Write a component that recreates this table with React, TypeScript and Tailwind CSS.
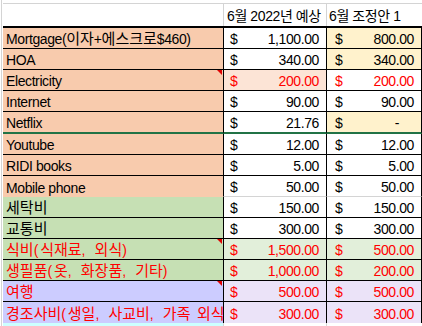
import React from 'react'

type Row = {
  label: string
  b: string
  c: string
  aBg: string
  bBg: string
  cBg: string
  aRed?: boolean
  red?: boolean
  note?: boolean
  line: string
}

const ORANGE = 'bg-[#f8cbad]'
const GREEN = 'bg-[#c6e0b4]'
const PURPLE = 'bg-[#ccccff]'
const WHITE = 'bg-white'
const YELLOW = 'bg-[#fff2cc]'
const LGREEN = 'bg-[#e2efda]'
const LPURPLE = 'bg-[#ebe3f8]'

const rows: Row[] = [
  { label: 'Mortgage(이자+에스크로$460)', b: '1,100.00', c: '800.00', aBg: ORANGE, bBg: WHITE, cBg: YELLOW, line: 'black' },
  { label: 'HOA', b: '340.00', c: '340.00', aBg: ORANGE, bBg: WHITE, cBg: YELLOW, line: 'black' },
  { label: 'Electricity', b: '200.00', c: '200.00', aBg: ORANGE, bBg: 'bg-[#fce4d6]', cBg: WHITE, red: true, note: true, line: 'black' },
  { label: 'Internet', b: '90.00', c: '90.00', aBg: ORANGE, bBg: WHITE, cBg: WHITE, line: 'black' },
  { label: 'Netflix', b: '21.76', c: '-', aBg: ORANGE, bBg: WHITE, cBg: YELLOW, line: 'green' },
  { label: 'Youtube', b: '12.00', c: '12.00', aBg: ORANGE, bBg: WHITE, cBg: WHITE, line: 'black' },
  { label: 'RIDI books', b: '5.00', c: '5.00', aBg: ORANGE, bBg: WHITE, cBg: WHITE, line: 'black' },
  { label: 'Mobile phone', b: '50.00', c: '50.00', aBg: ORANGE, bBg: WHITE, cBg: WHITE, line: 'gray' },
  { label: '세탁비', b: '150.00', c: '150.00', aBg: GREEN, bBg: WHITE, cBg: WHITE, line: 'black' },
  { label: '교통비', b: '300.00', c: '300.00', aBg: GREEN, bBg: WHITE, cBg: WHITE, line: 'black' },
  { label: '식비(식재료, 외식)', b: '1,500.00', c: '500.00', aBg: GREEN, bBg: LGREEN, cBg: LGREEN, aRed: true, red: true, note: true, line: 'black' },
  { label: '생필품(옷, 화장품, 기타)', b: '1,000.00', c: '200.00', aBg: GREEN, bBg: LGREEN, cBg: LGREEN, aRed: true, red: true, line: 'black' },
  { label: '여행', b: '500.00', c: '500.00', aBg: PURPLE, bBg: LPURPLE, cBg: LPURPLE, aRed: true, red: true, note: true, line: 'black' },
  { label: '경조사비(생일, 사교비, 가족 외식)', b: '300.00', c: '300.00', aBg: PURPLE, bBg: LPURPLE, cBg: LPURPLE, aRed: true, red: true, line: 'none' },
]

function lineClass(line: string, col: 'a' | 'bc') {
  if (line === 'black') return 'h-[21px] border-b border-black'
  if (line === 'green') return 'h-[22px] border-b-2 border-[#217346]'
  if (line === 'gray') return col === 'a' ? 'h-[21px]' : 'h-[21px] border-b border-[#d4d4d4]'
  return 'h-[21px]'
}

const HANGUL = /[\uac00-\ud7a3]/

// hangul is drawn larger; in all-korean labels the punctuation is half-width, like Gulim
function Label({ text }: { text: string }) {
  const korean = !/[A-Za-z]/.test(text)
  if (korean) {
    return (
      <>
        {Array.from(text).map((ch, i) =>
          HANGUL.test(ch) ? (
            <span key={i} className="text-[15px] tracking-normal">
              {ch}
            </span>
          ) : (
            <span key={i} className="inline-block w-[6.5px] whitespace-pre">
              {ch}
            </span>
          ),
        )}
      </>
    )
  }
  const parts = text.split(/([\uac00-\ud7a3]+)/).filter(Boolean)
  return (
    <>
      {parts.map((p, i) =>
        HANGUL.test(p) ? (
          <span key={i} className="text-[15px] tracking-normal">
            {p}
          </span>
        ) : (
          <span key={i}>{p}</span>
        ),
      )}
    </>
  )
}

function Money({ value, red, bg, line, padL, cls }: { value: string; red?: boolean; bg: string; line: string; padL: string; cls: string }) {
  return (
    <div className={`${cls} ${bg} ${lineClass(line, 'bc')} flex items-end justify-between pb-[1px] ${padL} ${value === '-' ? 'pr-[22px]' : 'pr-[7px]'} ${red ? 'text-[#ff0000]' : 'text-black'}`}>
      <span>$</span>
      <span>{value}</span>
    </div>
  )
}

export default function App() {
  return (
    <div
      className="relative h-[326px] w-[422px] overflow-hidden bg-white text-[14px] leading-[16px] tracking-[-0.4px]"
      style={{ fontFamily: "'Liberation Sans', 'Noto Sans CJK KR', sans-serif" }}
    >
      <div className="ml-[1px] border-l border-[#d4d4d4] pl-[1px]">
        <div className="h-[4px] border-b border-[#d4d4d4]" />
        <div className="flex h-[24px] border-b-2 border-black">
          <div className="w-[220px]" />
          <div className="flex w-[103px] items-end border-l border-[#d4d4d4] pb-[2px] pl-[3px] whitespace-nowrap">6월 2022년 예상</div>
          <div className="flex w-[96px] items-end border-l border-[#d4d4d4] pb-[2px] pl-[2px] whitespace-nowrap">6월 조정안 1</div>
        </div>
        {rows.map((r) => (
          <div key={r.label} className="flex">
            <div
              className={`relative w-[220px] overflow-hidden whitespace-nowrap ${r.aBg} ${lineClass(r.line, 'a')} flex items-end pb-[1px] pl-[3px] ${r.aRed ? 'text-[#ff0000]' : 'text-black'}`}
            >
              <span className="whitespace-nowrap">
                <Label text={r.label} />
              </span>
              {r.note && (
                <span className="absolute right-[1px] top-0 h-0 w-0 border-l-[5px] border-t-[5px] border-l-transparent border-t-[#e00000]" />
              )}
            </div>
            <Money value={r.b} red={r.red} bg={r.bBg} line={r.line} padL="pl-[6px]" cls="w-[103px] border-l border-l-black" />
            <Money value={r.c} red={r.red} bg={r.cBg} line={r.line} padL="pl-[8px]" cls="w-[96px] border-x border-x-black" />
          </div>
        ))}
        <div className="flex h-[10px]">
          <div className="w-[220px] bg-[#ccffff]" />
          <div className="w-[103px] border-l border-[#d4d4d4]" />
          <div className="w-[96px] border-l border-[#d4d4d4]" />
        </div>
      </div>
    </div>
  )
}
